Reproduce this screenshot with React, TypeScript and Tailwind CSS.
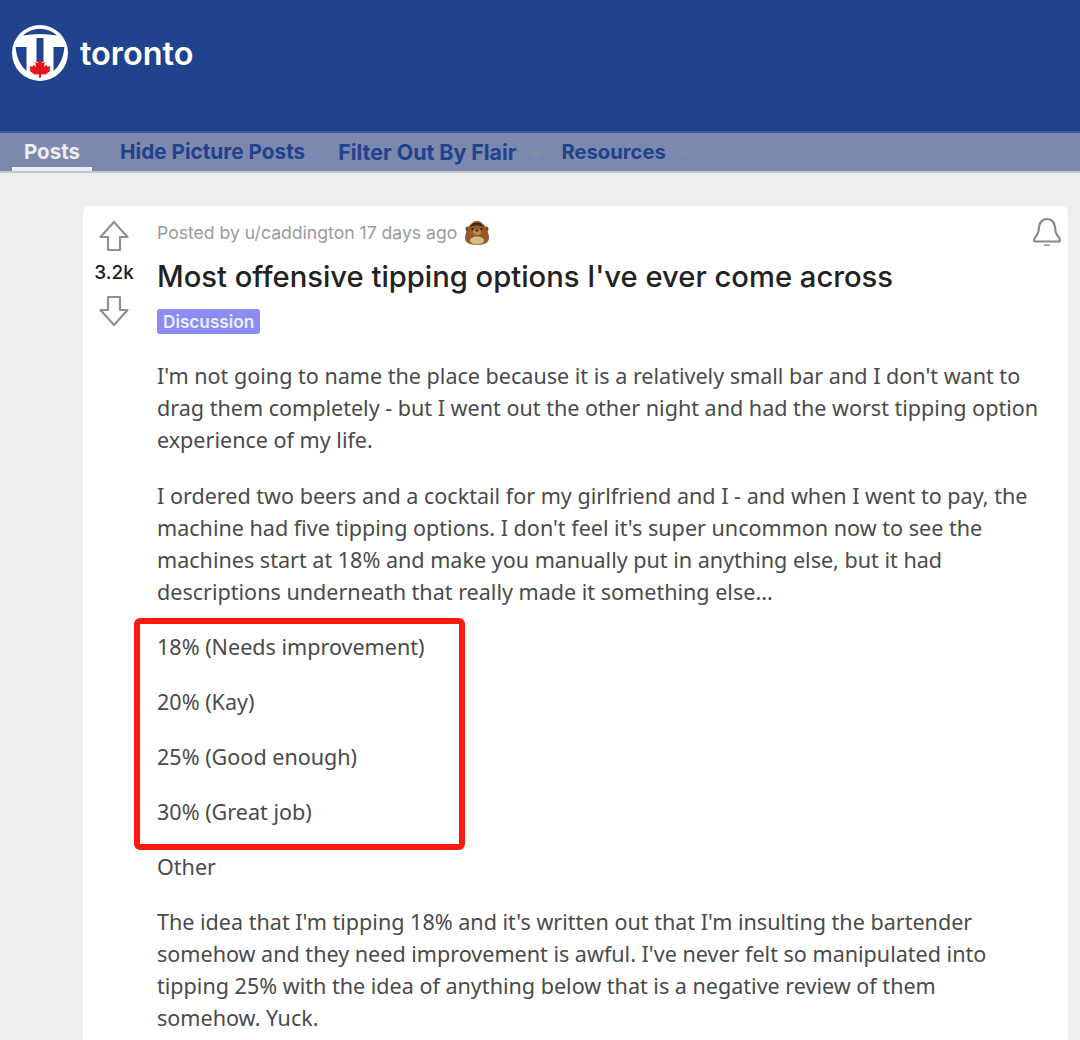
const noto = { fontFamily: '"Noto Sans", sans-serif' };
const inter = { fontFamily: 'Inter, sans-serif' };

function Logo() {
  return (
    <svg width="58" height="58" viewBox="0 0 58 58" className="shrink-0">
      <circle cx="29" cy="29" r="28" fill="#fff" />
      <path d="M12 11.500 A24.500 24.500 0 0 1 46 11.500 Q29 8.500 12 11.500 Z" fill="#21428c" />
      <path d="M25.500 14 L32.500 14 L32.500 38 L25.500 38 Z" fill="#21428c" />
      <path d="M4.500 23 L15.500 23 L15.500 47 Q6 39 4.500 23 Z" fill="#21428c" />
      <path d="M42.500 23 L53.500 23 Q52 39 42.500 47 Z" fill="#21428c" />
      <path d="M29 35 L31.500 39 L33.800 38 L33 43 L35.600 40.800 L36.400 42.800 L39.500 42.300 L38.500 45.800 L39.800 46.500 L34.500 50.500 L30 50.200 L30.300 53.500 L27.700 53.500 L28 50.200 L23.500 50.500 L18.200 46.500 L19.500 45.800 L18.500 42.300 L21.600 42.800 L22.400 40.800 L25 43 L24.200 38 L26.500 39 Z" fill="#e8141c" />
    </svg>
  );
}

function Bear() {
  return (
    <svg width="26" height="26" viewBox="0 0 26 26" className="shrink-0">
      <circle cx="4" cy="9" r="2.500" fill="#6e4a28" />
      <circle cx="22" cy="9" r="2.500" fill="#6e4a28" />
      <path d="M13 1 C19 1 24 9 25 17 C25.500 23 20 25 13 25 C6 25 0.500 23 1 17 C2 9 7 1 13 1 Z" fill="#96592a" />
      <path d="M6 7 C8 1 18 1 20 7 C16 5 10 5 6 7 Z" fill="#3f2a1a" />
      <ellipse cx="13" cy="20.500" rx="7" ry="4" fill="#d6bd84" />
      <ellipse cx="13" cy="12" rx="4" ry="3" fill="#b98a52" />
      <ellipse cx="13" cy="10.500" rx="1.500" ry="1" fill="#2b1a10" />
      <circle cx="8.500" cy="9" r="1" fill="#1d120b" />
      <circle cx="17.500" cy="9" r="1" fill="#1d120b" />
    </svg>
  );
}

function Arrow({ down }: { down?: boolean }) {
  return (
    <svg width="30" height="32" viewBox="0 0 30 32" className={down ? "rotate-180" : ""}>
      <path d="M15 2 L28.500 17 L21 17 L21 30 L9 30 L9 17 L1.500 17 Z" fill="none" stroke="#8f9294" strokeWidth="2.200" strokeLinejoin="round" />
    </svg>
  );
}

function Bell() {
  return (
    <svg width="32" height="32" viewBox="0 0 32 32">
      <path d="M3 24 C3 21 7 20 7.500 15 L8 11 C8.500 6 12 3 16 3 C20 3 23.500 6 24 11 L24.500 15 C25 20 29 21 29 24 C29 25 28 25.500 27 25.500 L5 25.500 C4 25.500 3 25 3 24 Z" fill="none" stroke="#878a8c" strokeWidth="2.200" strokeLinejoin="round" />
      <path d="M12.500 28.500 L19.500 28.500 C19 30.500 13 30.500 12.500 28.500 Z" fill="#878a8c" />
    </svg>
  );
}

function NavItem({ label, caret, active, size }: { label: string; caret?: boolean; active?: boolean; size: string }) {
  return (
    <div className={`flex h-full items-center px-3 pt-[5px] border-b-[4px] ${active ? "border-[#edeef0] text-[#edeef0]" : "border-transparent text-[#21428c]"}`}>
      <span className={`${size} font-bold leading-none`}>{label}</span>
      {caret && <span className="ml-[12px] mt-[3px] w-0 h-0 border-x-[7px] border-x-transparent border-t-[7px] border-t-[#868da3]" />}
    </div>
  );
}

const P = ({ children }: { children: React.ReactNode }) => <p className="mb-[23px]">{children}</p>;

export default function App() {
  return (
    <div className="h-[1040px] overflow-hidden bg-[#edeef0]" style={noto}>
      <header className="h-[131px] bg-[#21428c] flex items-start pl-[11px] pt-[24px] gap-[11px]">
        <Logo />
        <h1 className="text-[32.400px] font-semibold leading-[60px] text-white" style={inter}>toronto</h1>
      </header>
      <nav className="h-[42px] bg-[#7c88ad] border-t-2 border-t-[#3a57a0] border-b-2 border-b-[#c4c7cf] flex items-stretch" style={inter}>
        <div className="flex h-full">
          <div className="pl-[12px]"><NavItem label="Posts" active size="text-[20.500px]" /></div>
          <div className="ml-[16px] flex"><NavItem label="Hide Picture Posts" size="text-[20.750px]" /></div>
          <div className="ml-[9px] flex"><NavItem label="Filter Out By Flair" caret size="text-[21.350px]" /></div>
          <div className="ml-[-5px] flex"><NavItem label="Resources" caret size="text-[20.200px]" /></div>
        </div>
      </nav>
      <main className="pl-[83px] pr-[12px] pt-[33px]">
        <article className="relative bg-white rounded-[6px] flex h-[900px]">
          <div className="w-[74px] shrink-0 flex flex-col items-center pr-[12px] pt-[14px]" style={inter}>
            <Arrow />
            <span className="text-[19px] font-medium leading-[24px] mt-[9px] text-[#1a1a1b]">3.2k</span>
            <div className="mt-[10px]"><Arrow down /></div>
          </div>
          <div className="flex-1 pt-[13px] pr-[28px]">
            <div className="flex items-center gap-[7px] h-[28px] text-[17.600px] text-[#999b9d]" style={inter}>
              <span>Posted by u/caddington 17 days ago</span>
              <Bear />
            </div>
            <h2 className="text-[29.200px] font-medium leading-[40px] mt-[10px] text-[#222222]" style={inter}>Most offensive tipping options I've ever come across</h2>
            <span className="inline-block mt-[12px] h-[25px] px-[6px] rounded-[3px] bg-[#8c8cf4] text-[#edeef8] text-[17.200px] font-semibold leading-[25px]" style={inter}>Discussion</span>
            <div className="mt-[26px] text-[21.550px] leading-[32px] text-[#4a4a4b]">
              <p className="mb-[24px]">I'm not going to name the place because it is a relatively small bar and I don't want to drag them completely - but I went out the other night and had the worst tipping option experience of my life.</p>
              <P>I ordered two beers and a cocktail for my girlfriend and I - and when I went to pay, the machine had five tipping options. I don't feel it's super uncommon now to see the machines start at 18% and make you manually put in anything else, but it had descriptions underneath that really made it something else...</P>
              <P>18% (Needs improvement)</P>
              <P>20% (Kay)</P>
              <P>25% (Good enough)</P>
              <P>30% (Great job)</P>
              <P>Other</P>
              <P>The idea that I'm tipping 18% and it's written out that I'm insulting the bartender somehow and they need improvement is awful. I've never felt so manipulated into tipping 25% with the idea of anything below that is a negative review of them somehow. Yuck.</P>
            </div>
          </div>
          <div className="absolute right-[5px] top-[10px]"><Bell /></div>
          <div className="absolute left-[51px] top-[412px] w-[331px] h-[232px] rounded-[6px] border-[6px] border-[#fa1a0e]" />
        </article>
      </main>
    </div>
  );
}
